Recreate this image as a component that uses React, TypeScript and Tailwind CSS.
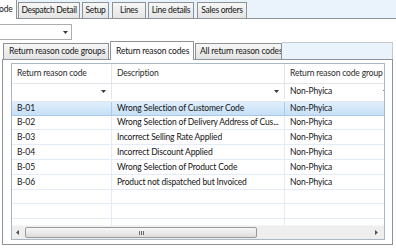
import React from "react";

const rows: [string, string, string, string][] = [
  ["B-01", "Wrong Selection of Customer Code", "Non-Phyica", "h-[14px]"],
  ["B-02", "Wrong Selection of Delivery Address of Cus...", "Non-Phyica", "h-[14px]"],
  ["B-03", "Incorrect Selling Rate Applied", "Non-Phyica", "h-[15px]"],
  ["B-04", "Incorrect Discount Applied", "Non-Phyica", "h-[15px]"],
  ["B-05", "Wrong Selection of Product Code", "Non-Phyica", "h-[15px]"],
  ["B-06", "Product not dispatched but Invoiced", "Non-Phyica", "h-[15px]"],
  ["", "", "", "h-[14px]"],
  ["", "", "", "h-[15px]"],
  ["", "", "", "h-[15px]"],
];

function DownTri() {
  return (
    <svg width="5" height="3" viewBox="0 0 5 3">
      <polygon points="0,0 5,0 2.5,3" fill="#3c3c3c" />
    </svg>
  );
}

function TopTab({ label, w, ml }: { label: string; w: string; ml: string }) {
  return (
    <div
      className={`${w} ${ml} h-[16px] border border-b-0 border-[#8d9296] bg-gradient-to-b from-[#f7f7f7] to-[#e4e4e4] flex items-center justify-center tracking-[-0.3px] whitespace-nowrap overflow-hidden`}
    >
      {label}
    </div>
  );
}

export default function App() {
  return (
    <div className="w-[396px] h-[250px] overflow-hidden bg-white font-['Lato',sans-serif] text-[8.5px] tracking-[-0.15px] text-[#141414]">
      {/* top tab strip */}
      <div className="flex items-end h-[19px] bg-[#eaf2fb] border-b border-[#8d9296]">
        <div className="w-[17px] h-[20px] mb-[-1px] bg-white border-r border-[#8d9296] leading-[20px] overflow-hidden whitespace-nowrap">
          <span className="ml-[-1px]">ode</span>
        </div>
        <TopTab label="Despatch Detail" w="w-[62px]" ml="ml-[1px]" />
        <TopTab label="Setup" w="w-[27px]" ml="ml-[2px]" />
        <TopTab label="Lines" w="w-[34px]" ml="ml-[3px]" />
        <TopTab label="Line details" w="w-[46px]" ml="ml-[2px]" />
        <TopTab label="Sales orders" w="w-[50px]" ml="ml-[3px]" />
      </div>

      {/* combo */}
      <div className="mt-[5px] ml-[-1px] w-[73px] h-[16px] border border-[#abadb3] flex bg-white">
        <div className="flex-1" />
        <div className="w-[11px] flex items-center justify-center">
          <DownTri />
        </div>
      </div>

      {/* inner tab control */}
      <div className="mt-[2px] ml-[2px] w-[391px]">
        <div className="flex items-end h-[18px] border-b border-[#8d9296]">
          <div className="ml-[1px] w-[106px] h-[16px] border border-b-0 border-[#8d9296] bg-gradient-to-b from-[#f7f7f7] to-[#e4e4e4] flex items-center pl-[5px] whitespace-nowrap overflow-hidden">
            Return reason code groups
          </div>
          <div className="ml-[1px] w-[84px] h-[19px] mb-[-1px] border border-b-0 border-[#8d9296] bg-white flex items-center pl-[5px] whitespace-nowrap overflow-hidden">
            Return reason codes
          </div>
          <div className="ml-[1px] w-[87px] h-[16px] border border-b-0 border-[#8d9296] bg-gradient-to-b from-[#f7f7f7] to-[#e4e4e4] flex items-center pl-[4px] whitespace-nowrap overflow-hidden">
            All return reason codes
          </div>
          <div className="flex-1 h-[17px] bg-[#eaf2fb] border-t border-r border-[#c3cad2]" />
        </div>

        <div className="h-[185px] border-x border-b border-[#8d9296] pl-[8px] pt-[3px]">
          <div className="w-[374px] h-[177px] border border-[#a9b6c3] flex flex-col overflow-hidden bg-white">
            {/* header */}
            <div className="flex h-[20px] shrink-0 border-b border-[#e2e6ea] text-[#2b2b2b] whitespace-nowrap">
              <div className="w-[100px] shrink-0 border-r border-[#e2e6ea] pl-[5px] flex items-center">Return reason code</div>
              <div className="w-[173px] shrink-0 border-r border-[#e2e6ea] pl-[5px] flex items-center">Description</div>
              <div className="w-[110px] shrink-0 pl-[5px] flex items-center overflow-hidden">Return reason code group</div>
            </div>
            {/* filter row */}
            <div className="flex h-[18px] shrink-0 border-b border-[#e2e6ea] whitespace-nowrap pb-[2px]">
              <div className="w-[100px] shrink-0 border-r border-[#e2e6ea] flex items-center justify-end pr-[5px]">
                <DownTri />
              </div>
              <div className="w-[173px] shrink-0 border-r border-[#e2e6ea] flex items-center justify-end pr-[5px]">
                <DownTri />
              </div>
              <div className="w-[104px] shrink-0 flex items-center justify-between pl-[5px] pr-[1px]">
                <span>Non-Phyica</span>
                <DownTri />
              </div>
            </div>
            {/* rows */}
            <div className="flex-1 overflow-hidden">
              {rows.map((r, i) => (
                <div
                  key={i}
                  className={`flex ${r[3]} whitespace-nowrap border-b ${
                    i === 0
                      ? "bg-gradient-to-b from-[#e0eefc] to-[#c6e0f6] border-[#a9cbea]"
                      : "border-[#e3ecf6]"
                  }`}
                >
                  <div className={`w-[100px] shrink-0 border-r ${i === 0 ? "border-[#a9cbea]" : "border-[#e3ecf6]"} pl-[5px] flex items-center`}>{r[0]}</div>
                  <div className={`w-[173px] shrink-0 border-r ${i === 0 ? "border-[#a9cbea]" : "border-[#e3ecf6]"} pl-[5px] flex items-center overflow-hidden`}>{r[1]}</div>
                  <div className="flex-1 pl-[5px] flex items-center">{r[2]}</div>
                </div>
              ))}
            </div>
            {/* scrollbar */}
            <div className="h-[14px] shrink-0 bg-[#eeeeee] flex items-center border-t border-[#f5f5f5]">
              <div className="w-[11px] flex justify-center">
                <svg width="3" height="5" viewBox="0 0 3 5">
                  <polygon points="3,0 3,5 0,2.5" fill="#505050" />
                </svg>
              </div>
              <div className="ml-[2px] w-[232px] h-[11px] rounded-[2px] border border-[#9a9a9a] bg-gradient-to-b from-[#f7f7f7] to-[#dcdcdc] flex items-center justify-center gap-[1px]">
                <div className="w-[1px] h-[4px] bg-[#6a6a6a]" />
                <div className="w-[1px] h-[4px] bg-[#6a6a6a]" />
                <div className="w-[1px] h-[4px] bg-[#6a6a6a]" />
              </div>
              <div className="flex-1" />
              <div className="w-[11px] flex justify-center">
                <svg width="3" height="5" viewBox="0 0 3 5">
                  <polygon points="0,0 0,5 3,2.5" fill="#505050" />
                </svg>
              </div>
              <div className="w-[2px]" />
            </div>
          </div>
        </div>
      </div>
    </div>
  );
}
